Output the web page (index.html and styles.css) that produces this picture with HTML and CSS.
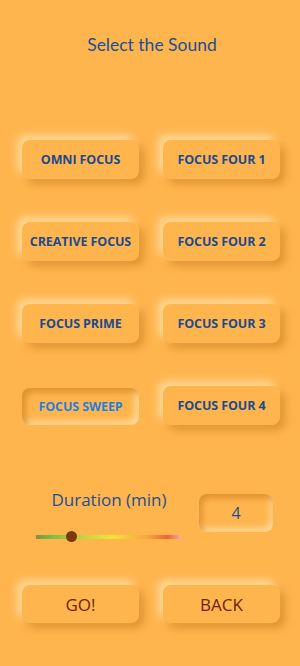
FILE: index.html
```html
<!DOCTYPE html>
<html lang="en">
<head>
    <meta charset="UTF-8">
    <meta name="viewport" content="width=device-width, initial-scale=1.0">
    <title>Select the Sound</title>
    <link rel="stylesheet" href="styles.css">
</head>
<body>

<main class="screen">
    <h1 class="title">Select the Sound</h1>

    <div class="sounds">
        <button class="sound">OMNI FOCUS</button>
        <button class="sound">FOCUS FOUR 1</button>
        <button class="sound">CREATIVE FOCUS</button>
        <button class="sound">FOCUS FOUR 2</button>
        <button class="sound">FOCUS PRIME</button>
        <button class="sound">FOCUS FOUR 3</button>
        <button class="sound selected">FOCUS SWEEP</button>
        <button class="sound">FOCUS FOUR 4</button>
    </div>

    <div class="duration">
        <div class="duration-left">
            <div class="duration-label">Duration (min)</div>
            <div class="slider">
                <div class="track"></div>
                <div class="thumb"></div>
            </div>
        </div>
        <div class="duration-value">4</div>
    </div>

    <div class="actions">
        <button class="action">GO!</button>
        <button class="action">BACK</button>
    </div>
</main>

</body>
</html>
```

FILE: styles.css
```css
body {
    margin: 0;
    padding: 0;
    background-color: #ffb54e;
    font-family: "Open Sans", sans-serif;
}

.screen {
    width: 300px;
    height: 666px;
    padding: 0 20px 0 22px;
    box-sizing: border-box;
}

.title {
    margin: 0;
    padding-top: 34px;
    padding-left: 2px;
    font-family: Lato, sans-serif;
    font-weight: normal;
    font-size: 17.5px;
    line-height: 22px;
    color: #1d4f93;
    text-align: center;
}

/* sound buttons */
.sounds {
    margin-top: 84px;
    display: grid;
    grid-template-columns: 117px 117px;
    column-gap: 24px;
    row-gap: 43px;
}

button {
    font-family: "Open Sans", sans-serif;
    border: none;
    cursor: pointer;
    background-color: #ffb54e;
    border-radius: 8px;
}

.sound {
    height: 39px;
    padding: 0;
    font-size: 12.5px;
    font-weight: bold;
    color: #1b4a8e;
    letter-spacing: -0.1px;
    box-shadow: -5px -5px 9px rgba(255, 226, 170, 0.8), 5px 5px 8px rgba(200, 125, 28, 0.6);
}

.sound.selected {
    margin-top: 2px;
    height: 37px;
    color: #1f7fe0;
    box-shadow: inset 4px 4px 6px rgba(200, 120, 25, 0.6), inset -4px -4px 6px rgba(255, 222, 160, 0.9);
}

/* duration */
.duration {
    margin-top: 70px;
    display: flex;
    align-items: flex-start;
}

.duration-left {
    margin-left: 14px;
    width: 146px;
}

.duration-label {
    margin-top: -6px;
    font-size: 17px;
    line-height: 22px;
    color: #1d4f93;
    text-align: center;
}

.slider {
    position: relative;
    margin-top: 24px;
    height: 4px;
}

.track {
    height: 4px;
    background: linear-gradient(to right, #7f8f3c 0%, #7cbc45 10%, #b7d43f 30%, #f2e43a 52%, #f4a23e 78%, #f0623a 90%, #f7b4a0 100%);
}

.thumb {
    position: absolute;
    left: 30px;
    top: -4px;
    width: 11px;
    height: 11px;
    border-radius: 50%;
    background-color: #7a3a0a;
}

.duration-value {
    margin-left: 17px;
    margin-top: -1px;
    width: 74px;
    height: 38px;
    border-radius: 8px;
    font-size: 16px;
    line-height: 38px;
    text-align: center;
    color: #1d4f93;
    box-shadow: inset 3px 4px 6px rgba(200, 120, 25, 0.6), inset -3px -4px 6px rgba(255, 222, 160, 0.9);
}

/* bottom buttons */
.actions {
    margin-top: 46px;
    display: grid;
    grid-template-columns: 117px 117px;
    column-gap: 24px;
}

.action {
    height: 38px;
    font-size: 17px;
    color: #6b2408;
    box-shadow: -5px -5px 9px rgba(255, 226, 170, 0.8), 5px 5px 8px rgba(200, 125, 28, 0.6);
}
```
